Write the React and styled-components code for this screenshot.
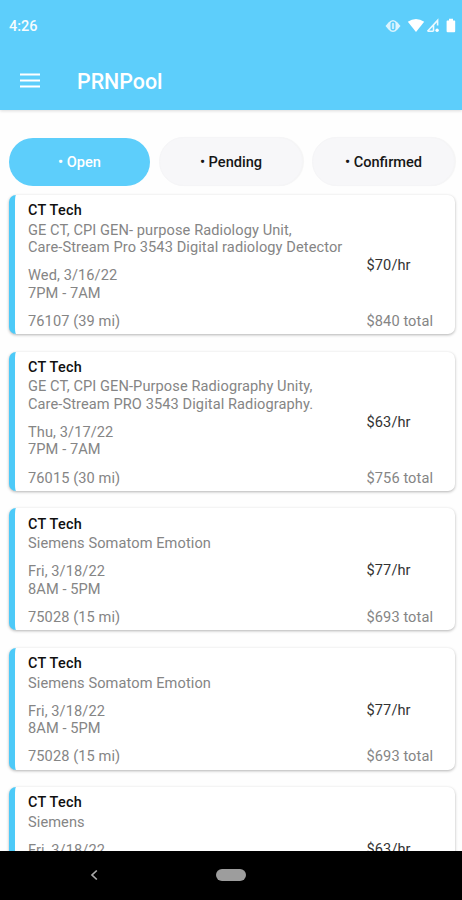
import React from "react";
import styled, { createGlobalStyle } from "styled-components";

const GlobalStyle = createGlobalStyle`
  * { box-sizing: border-box; }
  body { margin: 0; background: #fefefe; font-family: Roboto, "Liberation Sans", sans-serif; }
`;

const Screen = styled.div`
  width: 462px;
  height: 900px;
  display: flex;
  flex-direction: column;
  overflow: hidden;
  background: #fefefe;
`;

const Header = styled.header`
  flex: none;
  height: 109.5px;
  background: #5dcefb;
  color: #fff;
  box-shadow: 0 1px 3px rgba(0, 0, 0, 0.14);
`;

const StatusBar = styled.div`
  height: 52px;
  padding: 0 6px 0 9px;
  display: flex;
  align-items: center;
  justify-content: space-between;
`;

const Clock = styled.span`
  padding-top: 1px;
  font-size: 14.5px;
  font-weight: 500;
  opacity: 0.95;
`;

const StatusIcons = styled.svg`
  display: block;
  width: 72px;
  height: 20px;
`;

const TitleBar = styled.div`
  height: 57px;
  padding-left: 20px;
  display: flex;
  align-items: center;
  gap: 37px;
`;

const MenuIcon = styled.svg`
  display: block;
  width: 20px;
  height: 16px;
`;

const Title = styled.h1`
  margin: 1px 0 0;
  font-size: 21.4px;
  font-weight: 500;
`;

const Tabs = styled.nav`
  flex: none;
  display: grid;
  grid-template-columns: 141px 143.5px 143px;
  justify-content: space-between;
  align-items: center;
  height: 50px;
  margin: 27px 7px 0 9px;
`;

const Tab = styled.button`
  height: ${(p) => (p.$active ? "48px" : "49px")};
  padding: 1px 0 0;
  border: ${(p) => (p.$active ? "0" : "1px solid #f5f5f7")};
  border-radius: 25px;
  background: ${(p) => (p.$active ? "#5dcefb" : "#f7f7f9")};
  color: ${(p) => (p.$active ? "#fff" : "#161616")};
  box-shadow: ${(p) => (p.$active ? "none" : "1px 0 1px rgba(0, 0, 0, 0.04)")};
  font: 500 14.6px Roboto, "Liberation Sans", sans-serif;
`;

const List = styled.main`
  flex: 1;
  min-height: 0;
  overflow: hidden;
  padding: 8.3px 7px 0 9px;
  display: flex;
  flex-direction: column;
  gap: 17.3px;
`;

const Card = styled.article`
  flex: none;
  display: flex;
  justify-content: space-between;
  padding: 7.2px 0 4.1px 13px;
  border-left: 6px solid #4dcaf8;
  border-radius: 7px;
  background: #fff;
  box-shadow: 0 1px 3px rgba(0, 0, 0, 0.3);
  font-size: 14.6px;
  line-height: 17.4px;
  letter-spacing: 0.09px;
  color: #858585;
`;

const Role = styled.h2`
  margin: 0 0 2.2px;
  font-size: 14.4px;
  font-weight: 500;
  line-height: 17.4px;
  letter-spacing: 0.25px;
  color: #101010;
`;

const Text = styled.p`
  margin: 0 0 10.8px;
  white-space: pre-line;
  &:last-child { margin: 0; }
`;

const Pay = styled.div`
  width: 88.5px;
  display: grid;
  grid-template-rows: 1fr auto 1fr;
`;

const Rate = styled.span`
  color: #333;
`;

const Total = styled.span`
  align-self: end;
`;

const NavBar = styled.footer`
  flex: none;
  height: 49.5px;
  background: #000;
  display: grid;
  grid-template-columns: 1fr auto 1fr;
  align-items: center;
`;

const BackIcon = styled.svg`
  display: block;
  width: 8px;
  height: 12px;
  margin-left: 90px;
`;

const HomePill = styled.div`
  width: 30px;
  height: 12px;
  border-radius: 6px;
  background: #9d9d9d;
`;

const shifts = [
  ["GE CT, CPI GEN- purpose Radiology Unit,\nCare-Stream Pro 3543 Digital radiology Detector", "Wed, 3/16/22\n7PM - 7AM", "76107 (39 mi)", "$70/hr", "$840 total"],
  ["GE CT, CPI GEN-Purpose Radiography Unity,\nCare-Stream PRO 3543 Digital Radiography.", "Thu, 3/17/22\n7PM - 7AM", "76015 (30 mi)", "$63/hr", "$756 total"],
  ["Siemens Somatom Emotion", "Fri, 3/18/22\n8AM - 5PM", "75028 (15 mi)", "$77/hr", "$693 total"],
  ["Siemens Somatom Emotion", "Fri, 3/18/22\n8AM - 5PM", "75028 (15 mi)", "$77/hr", "$693 total"],
  ["Siemens", "Fri, 3/18/22\n8AM - 5PM", "75028 (15 mi)", "$63/hr", "$567 total"],
];

export default function App() {
  return (
    <Screen>
      <GlobalStyle />
      <Header>
        <StatusBar>
          <Clock>4:26</Clock>
          <StatusIcons viewBox="0 0 72 20" fill="#fff">
            <g opacity="0.78">
              <path d="M1.5 10 4.5 6.5Q9 1.5 13.5 6.5L16.5 10 13.5 13.5Q9 18.5 4.5 13.5Z" />
              <rect x="7.2" y="6.3" width="3.6" height="7.4" rx="1.3" fill="#e5f8ff" stroke="#5dcefb" strokeWidth="1.4" />
            </g>
            <path d="M23.8 5.8Q32 .2 40.2 5.8L32 16Z" />
            <path d="M43.5 15.2 53.6 4.4V9.5M43.5 15.2H49.5M49.5 9V15.2" fill="none" stroke="#fff" strokeWidth="1.6" opacity=".88" />
            <circle cx="53.1" cy="14.3" r="1.7" />
            <path d="M63.3 4.5H65V2.8H69V4.5H70.5Q71.2 4.5 71.2 5.3V15.3Q71.2 16.3 70.3 16.3H63.7Q62.6 16.3 62.6 15.3V5.3Q62.6 4.5 63.3 4.5Z" />
          </StatusIcons>
        </StatusBar>
        <TitleBar>
          <MenuIcon viewBox="0 0 20 16" stroke="#fff" strokeWidth="2">
            <path d="M0 1.6H20M0 7.6H20M0 13.6H20" />
          </MenuIcon>
          <Title>PRNPool</Title>
        </TitleBar>
      </Header>
      <Tabs>
        <Tab $active>• Open</Tab>
        <Tab>• Pending</Tab>
        <Tab>• Confirmed</Tab>
      </Tabs>
      <List>
        {shifts.map(([equipment, time, place, rate, total], i) => (
          <Card key={i}>
            <div>
              <Role>CT Tech</Role>
              <Text>{equipment}</Text>
              <Text>{time}</Text>
              <Text>{place}</Text>
            </div>
            <Pay>
              <span />
              <Rate>{rate}</Rate>
              <Total>{total}</Total>
            </Pay>
          </Card>
        ))}
      </List>
      <NavBar>
        <BackIcon viewBox="0 0 8 12" fill="none" stroke="#aaa" strokeWidth="1.7">
          <path d="M6.8 1.5 2 6 6.8 10.5" />
        </BackIcon>
        <HomePill />
      </NavBar>
    </Screen>
  );
}
